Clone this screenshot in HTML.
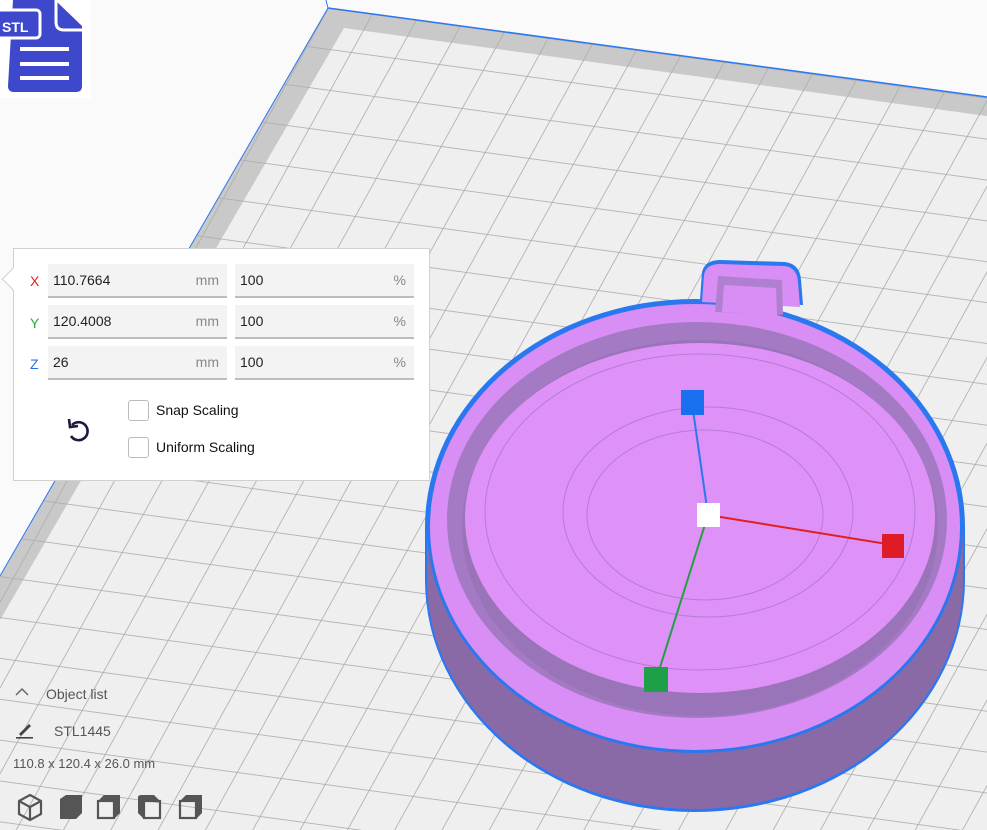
<!DOCTYPE html>
<html><head><meta charset="utf-8">
<style>
*{margin:0;padding:0;box-sizing:border-box}
html,body{width:987px;height:830px;overflow:hidden}
body{background:#fafafa;font-family:"Liberation Sans","DejaVu Sans",sans-serif;position:relative}
svg.bg{position:absolute;left:0;top:0;display:block}
.panel{position:absolute;left:13px;top:248px;width:417px;height:233px;background:#fff;border:1px solid #d0d0d0}
.arrow{position:absolute;left:-9px;top:22px;width:16px;height:16px;background:#fff;border-left:1px solid #d0d0d0;border-bottom:1px solid #d0d0d0;transform:rotate(45deg)}
.lbl{position:absolute;left:16px;font-size:14px}
.fld{position:absolute;height:34px;background:#f3f3f3;border-bottom:2px solid #bdbdbd;font-size:14px;color:#222;line-height:32px;padding-left:5px}
.fld span{position:absolute;right:8px;top:0;color:#888}
.cb{position:absolute;left:114px;width:21px;height:21px;border:1px solid #bbb;border-radius:3px;background:#fff}
.cbt{position:absolute;left:142px;font-size:14px;color:#111}
.bl{position:absolute;font-size:14px;color:#555}
</style></head><body>
<svg class="bg" width="987" height="830" viewBox="0 0 987 830">
<defs>
<pattern id="g" width="1" height="1" patternUnits="userSpaceOnUse">
<path d="M0 0H1M0 0V1" stroke="#adadad" stroke-width="0.04" fill="none"/>
</pattern>
<clipPath id="bed"><polygon points="328,8 987,97 987,830 0,830 0,576"/></clipPath>
</defs>
<polygon points="328,8 987,97 987,830 0,830 0,576" fill="#c9c9c9"/>
<polygon points="344,28 987,116 987,830 0,830 0,620" fill="#efefef"/>
<g clip-path="url(#bed)">
<g transform="matrix(44,6,-21,38,328,8)">
<rect x="-20" y="0" width="60" height="40" fill="url(#g)"/>
</g>
</g>
<polyline points="328,8 987,97" stroke="#2a78f0" stroke-width="1.5" fill="none"/>
<polyline points="328,8 0,576" stroke="#2a78f0" stroke-width="1" fill="none"/>
<line x1="326" y1="0" x2="328" y2="8" stroke="#2a78f0"/>
<!-- object -->
<g>
<path d="M425 527 A270 228 0 0 1 965 527 L965 580 A270 232 0 0 1 425 580 Z" fill="#2a78f0"/>
<ellipse cx="695" cy="580" rx="268" ry="229" fill="#8a6aa6"/>
<rect x="427" y="527" width="536" height="53" fill="#8a6aa6"/>
<path d="M700 300 L702 272 Q705 260 720 260 L785 262 Q800 264 801 280 L803 305 Z" fill="#2a78f0"/>
<ellipse cx="695" cy="527" rx="268" ry="226" fill="#2a78f0"/>
<ellipse cx="695" cy="527" rx="265" ry="223" fill="#d98ef5"/>
<path d="M702 302 L704 275 Q706 264 720 264 L784 266 Q797 267 798 282 L800 307 Z" fill="#d98ef5"/>
<path d="M715 312 L718 276 L782 280 L783 315 Z" fill="#b080d0"/>
<path d="M722 312 L724 285 L776 288 L777 315 Z" fill="#d98ef5"/>
<ellipse cx="697" cy="520" rx="250" ry="198" fill="#a57ac4"/>
<ellipse cx="700" cy="528" rx="238" ry="188" fill="#9a74b8"/>
<ellipse cx="700" cy="518" rx="235" ry="175" fill="#de92f8"/>
<ellipse cx="700" cy="512" rx="215" ry="158" fill="none" stroke="#b67ad6" stroke-width="1"/>
<ellipse cx="708" cy="512" rx="145" ry="105" fill="none" stroke="#b67ad6" stroke-width="1"/>
<ellipse cx="705" cy="515" rx="118" ry="85" fill="none" stroke="#b67ad6" stroke-width="1"/>
<line x1="692" y1="403" x2="708" y2="515" stroke="#2a78f0" stroke-width="2"/>
<line x1="708" y1="515" x2="893" y2="545" stroke="#e02020" stroke-width="2"/>
<line x1="708" y1="515" x2="656" y2="680" stroke="#20a040" stroke-width="2"/>
<rect x="681" y="390" width="23" height="25" fill="#1a6ef0"/>
<rect x="697" y="503" width="23" height="24" fill="#fff"/>
<rect x="882" y="534" width="22" height="24" fill="#dd1c28"/>
<rect x="644" y="667" width="24" height="25" fill="#1fa048"/>
</g>
<!-- STL icon -->
<rect x="0" y="0" width="91" height="98" fill="#fff"/>
<path d="M13 0 H55 L82 26 V86 Q82 92 76 92 H14 Q8 92 8 86 Z" fill="#3d48cc"/>
<path d="M56 0 V22 Q56 30 64 30 H82" fill="none" stroke="#fff" stroke-width="3"/>
<rect x="-4" y="10" width="44" height="28" rx="4" fill="#3d48cc" stroke="#fff" stroke-width="3"/>
<text x="2" y="32" font-family="Liberation Sans" font-weight="bold" font-size="14" fill="#fff">STL</text>
<rect x="20" y="47" width="49" height="4" fill="#fff"/>
<rect x="20" y="62" width="49" height="4" fill="#fff"/>
<rect x="20" y="76" width="49" height="4" fill="#fff"/>
</svg>

<div class="panel">
<div class="arrow"></div>
<div class="lbl" style="top:24px;color:#e0202a">X</div>
<div class="lbl" style="top:66px;color:#2aaa40">Y</div>
<div class="lbl" style="top:107px;color:#2a6ef0">Z</div>
<div class="fld" style="left:34px;top:15px;width:179px">110.7664<span>mm</span></div>
<div class="fld" style="left:221px;top:15px;width:179px">100<span>%</span></div>
<div class="fld" style="left:34px;top:56px;width:179px">120.4008<span>mm</span></div>
<div class="fld" style="left:221px;top:56px;width:179px">100<span>%</span></div>
<div class="fld" style="left:34px;top:97px;width:179px">26<span>mm</span></div>
<div class="fld" style="left:221px;top:97px;width:179px">100<span>%</span></div>
<svg style="position:absolute;left:52px;top:167px" width="26" height="28" viewBox="0 0 26 28">
<path d="M6 9 A9 9 0 1 1 5 20" fill="none" stroke="#1a1a3a" stroke-width="2.6"/>
<path d="M3 3 L4 11 L12 10" fill="none" stroke="#1a1a3a" stroke-width="2.6"/>
</svg>
<div class="cb" style="top:151px"></div>
<div class="cbt" style="top:153px">Snap Scaling</div>
<div class="cb" style="top:188px"></div>
<div class="cbt" style="top:190px">Uniform Scaling</div>
</div>

<svg style="position:absolute;left:14px;top:686px" width="16" height="12"><path d="M2 9 L8 3 L14 9" fill="none" stroke="#666" stroke-width="1.5"/></svg>
<div class="bl" style="left:46px;top:686px">Object list</div>
<svg style="position:absolute;left:15px;top:722px" width="20" height="18"><path d="M4 12 L14 2 L16 4 L6 14 Z" fill="#444"/><rect x="1" y="15" width="17" height="1.6" fill="#444"/></svg>
<div class="bl" style="left:54px;top:723px">STL1445</div>
<div class="bl" style="left:13px;top:756px;font-size:13px">110.8 x 120.4 x 26.0 mm</div>
<svg style="position:absolute;left:16px;top:793px" width="190" height="30" viewBox="0 0 190 30">
<g fill="none" stroke="#555" stroke-width="2.2" stroke-linejoin="round">
<path d="M14 2 L25 8 V21 L14 27 L3 21 V8 Z M3 8 L14 14 L25 8 M14 14 V27"/>
</g>
<g fill="#555"><path d="M44 6 L50 2 H66 V20 L60 26 H44 Z"/></g>
<g fill="none" stroke="#555" stroke-width="2.2"><rect x="82" y="8" width="16" height="17"/></g><path d="M82 8 L88 2 H104 V20 L98 26 V8 Z" fill="#555"/>
<g fill="none" stroke="#555" stroke-width="2.2"><rect x="128" y="8" width="16" height="17"/></g><path d="M122 4 Q122 2 126 2 H138 L144 8 H128 V26 L122 20 Z" fill="#555"/>
<g fill="none" stroke="#555" stroke-width="2.2"><rect x="164" y="8" width="16" height="17"/></g><path d="M164 8 L170 2 H186 V20 L180 26 V8 Z" fill="#555"/>
</svg>
</body></html>
